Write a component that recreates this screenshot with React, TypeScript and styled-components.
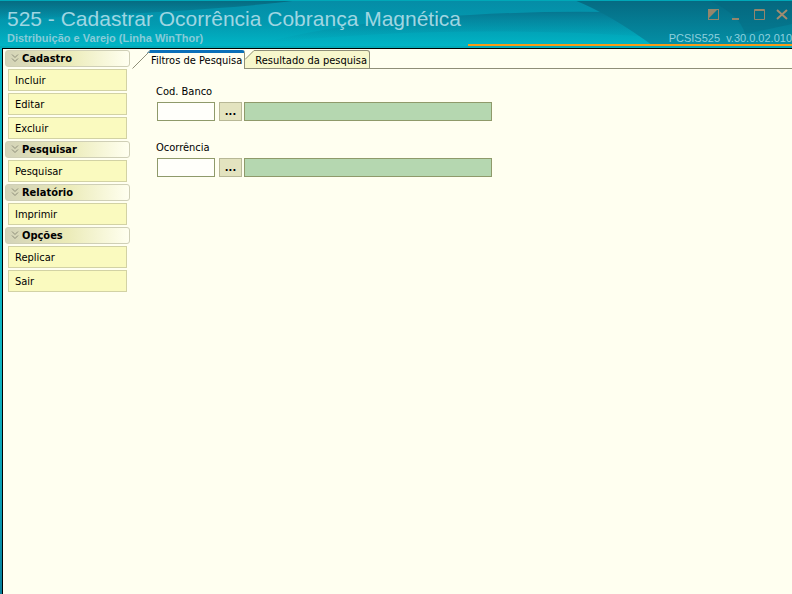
import React, { useState } from "react";
import styled, { createGlobalStyle } from "styled-components";

const UI_FONT = '"DejaVu Sans Condensed", "DejaVu Sans", sans-serif';
const HEAD_FONT = '"Liberation Sans", Arial, sans-serif';

const GlobalStyle = createGlobalStyle`
  *, *::before, *::after { box-sizing: border-box; }
  body { margin: 0; background: #fffff0; }
  button, input { font: inherit; color: inherit; margin: 0; }
`;

const Window = styled.div`
  min-height: 100vh;
  display: flex;
  flex-direction: column;
  background: linear-gradient(#00b4c6, #10b8c4 60%, #0a9db4 85%, #08809c);
  font: 11px/14px ${UI_FONT};
  color: #000;
`;

const Header = styled.header`
  position: relative;
  height: 48px;
  display: flex;
  justify-content: space-between;
  overflow: hidden;
  font-family: ${HEAD_FONT};
`;

const Backdrop = styled.svg`
  position: absolute;
  inset: 0;
  width: 100%;
  height: 100%;
`;

const TitleBlock = styled.div`
  position: relative;
  padding: 6px 0 0 7px;
  white-space: nowrap;
`;

const Title = styled.h1`
  margin: 0;
  font-size: 21px;
  line-height: 26px;
  font-weight: 400;
  color: #9fd6e2;
`;

const Subtitle = styled.p`
  margin: 0;
  font-size: 11px;
  line-height: 13px;
  font-weight: 700;
  color: #86cbd8;
`;

const HeaderSide = styled.div`
  position: relative;
  display: flex;
  flex: 0 0 324px;
  flex-direction: column;
  align-items: flex-end;
  justify-content: space-between;
  padding: 8px 0 2px;
`;

const Controls = styled.div`
  display: flex;
  gap: 10px;
  padding-right: 3px;
`;

const ControlButton = styled.button`
  width: 13px;
  height: 13px;
  padding: 0;
  border: 0;
  background: none;
  svg { display: block; }
`;

const Version = styled.div`
  align-self: stretch;
  border-bottom: 2px solid #f99a14;
  text-align: right;
  font-size: 11px;
  line-height: 12px;
  color: #8fd0de;
  white-space: pre;
`;

const Body = styled.div`
  flex: 1;
  display: flex;
  gap: 2px;
  margin-left: 2px;
  border-top: 1px solid #000;
  border-left: 1px solid #000;
  background: #fffff0;
`;

const Sidebar = styled.nav`
  flex: none;
  width: 127px;
  display: flex;
  flex-direction: column;
  gap: 2px;
  padding: 1px 0 0 2px;
`;

const Group = styled.section`
  display: flex;
  flex-direction: column;
  gap: 2px;
`;

const GroupTitle = styled.h2`
  display: flex;
  align-items: center;
  gap: 3px;
  height: 17px;
  margin: 0;
  padding-left: 5px;
  border: 1px solid #cfcfb6;
  border-radius: 3px;
  background: linear-gradient(90deg, #d3d3b8, #ebebb8 50%, #fffff0);
  font-size: 11px;
  font-weight: 700;
`;

const Item = styled.button`
  height: 22px;
  margin: 0 3px;
  padding: 1px 6px 0;
  border: 1px solid #d2d2a4;
  background: #fafabf;
  text-align: left;
`;

const Main = styled.main`
  flex: 1;
  min-width: 0;
`;

const TabList = styled.div`
  display: flex;
  height: 20px;
  padding-top: 1px;
`;

const Tab = styled.button`
  display: flex;
  padding: 0;
  border: 0;
  background: none;
  white-space: nowrap;
`;

const Slant = styled.svg`
  flex: none;
  display: block;
`;

const TabLabel = styled.span<{ $active: boolean }>`
  height: 19px;
  padding: ${(p) => (p.$active ? "1px 2px 0 1px" : "3px 2px 0 0")};
  border: solid #8f8f78;
  border-width: ${(p) => (p.$active ? "3px 1px 0 0" : "1px 1px 1px 0")};
  border-top-color: ${(p) => (p.$active ? "#0a6fb8" : "#8f8f78")};
  border-top-right-radius: 3px;
  background: ${(p) => (p.$active ? "#fffff0" : "#f7f7cc")};
`;

const TabRule = styled.div`
  flex: 1;
  border-bottom: 1px solid #8f8f78;
`;

const Filters = styled.form`
  display: flex;
  flex-direction: column;
  gap: 20px;
  padding: 16px 24px;
`;

const Field = styled.div`
  display: flex;
  flex-direction: column;
  gap: 3px;
`;

const FieldRow = styled.div`
  display: flex;
  height: 19px;
  padding-left: 1px;
`;

const CodeInput = styled.input`
  width: 58px;
  padding: 0 3px;
  border: 1px solid #8f9a6a;
  border-radius: 0;
  background: #fffffa;
`;

const LookupButton = styled.button`
  width: 23px;
  margin: 0 2px 0 4px;
  padding: 0;
  border: 1px solid #b8b896;
  background: #e3e3bf;
  font-weight: 700;
`;

const Description = styled.input`
  flex: 0 1 248px;
  min-width: 0;
  padding: 0 3px;
  border: 1px solid #8f9a6a;
  border-radius: 0;
  background: #b5d7b0;
`;

const groups = [
  { title: "Cadastro", items: ["Incluir", "Editar", "Excluir"] },
  { title: "Pesquisar", items: ["Pesquisar"] },
  { title: "Relatório", items: ["Imprimir"] },
  { title: "Opções", items: ["Replicar", "Sair"] },
];

const tabs = ["Filtros de Pesquisa", "Resultado da pesquisa"];

const fields = [
  { id: "banco", label: "Cod. Banco" },
  { id: "ocorrencia", label: "Ocorrência" },
];

function HeaderBackdrop() {
  return (
    <Backdrop viewBox="0 0 792 48" preserveAspectRatio="none" aria-hidden="true">
      <defs>
        <linearGradient id="base" x1="0" y1="0" x2="0" y2="1">
          <stop offset="0" stopColor="#058ca6" />
          <stop offset="0.5" stopColor="#029ab0" />
          <stop offset="1" stopColor="#00b8c8" />
        </linearGradient>
        <linearGradient id="dark" x1="0" y1="0" x2="0" y2="1">
          <stop offset="0" stopColor="#056a82" />
          <stop offset="1" stopColor="#0492a8" />
        </linearGradient>
        <linearGradient id="corner" x1="0" y1="0" x2="0" y2="1">
          <stop offset="0" stopColor="#066a80" />
          <stop offset="1" stopColor="#066a80" stopOpacity="0" />
        </linearGradient>
        <linearGradient id="band" x1="0" y1="0" x2="0" y2="1">
          <stop offset="0" stopColor="#067690" />
          <stop offset="1" stopColor="#02a4b8" stopOpacity="0" />
        </linearGradient>
      </defs>
      <rect width="792" height="48" fill="url(#base)" />
      <path d="M0 0 H300 Q230 10 0 20Z" fill="url(#corner)" />
      <path d="M258 44 Q350 20 470 15 Q540 11 606 12 L640 36 Q430 24 258 44Z" fill="url(#band)" />
      <path d="M574 0 H792 V48 H656 Q610 14 574 0Z" fill="url(#dark)" />
      <path d="M708 0 Q740 14 745 34 L792 24 V0Z" fill="#066078" opacity=".35" />
      <rect width="792" height="1" fill="#00a8b8" />
      <rect y="46" width="792" height="2" fill="#04aab8" />
    </Backdrop>
  );
}

function Chevrons() {
  return (
    <svg width="8" height="9" viewBox="0 0 8 9" fill="none" stroke="#8c8c78" aria-hidden="true">
      <path d="M1 0.5 L4 3.5 L7 0.5 M1 4.5 L4 7.5 L7 4.5" />
    </svg>
  );
}

const controls = [
  {
    label: "Recolher",
    icon: (
      <>
        <rect x="1.5" y="1.5" width="10" height="10" stroke="#94866c" />
        <path d="M1 11 V1 H11Z" fill="#94866c" />
      </>
    ),
  },
  { label: "Minimizar", icon: <path d="M2 11 H9" stroke="#94866c" strokeWidth="2" /> },
  {
    label: "Maximizar",
    icon: <path d="M1.5 1.5 H11.5 V11.5 H1.5Z M1 2.5 H12" stroke="#94866c" />,
  },
  { label: "Fechar", icon: <path d="M1 2 L11 11 M11 2 L1 11" stroke="#a08c70" strokeWidth="2" /> },
];

export default function App() {
  const [active, setActive] = useState(0);
  return (
    <Window>
      <GlobalStyle />
      <Header>
        <HeaderBackdrop />
        <TitleBlock>
          <Title>525 - Cadastrar Ocorrência Cobrança Magnética</Title>
          <Subtitle>Distribuição e Varejo (Linha WinThor)</Subtitle>
        </TitleBlock>
        <HeaderSide>
          <Controls>
            {controls.map((c) => (
              <ControlButton key={c.label} type="button" aria-label={c.label}>
                <svg width="13" height="13" viewBox="0 0 13 13" fill="none">{c.icon}</svg>
              </ControlButton>
            ))}
          </Controls>
          <Version>{"PCSIS525  v.30.0.02.010"}</Version>
        </HeaderSide>
      </Header>
      <Body>
        <Sidebar>
          {groups.map((g) => (
            <Group key={g.title}>
              <GroupTitle>
                <Chevrons />
                {g.title}
              </GroupTitle>
              {g.items.map((name) => (
                <Item key={name} type="button">{name}</Item>
              ))}
            </Group>
          ))}
        </Sidebar>
        <Main>
          <TabList role="tablist">
            {tabs.map((name, i) => (
              <Tab
                key={name}
                type="button"
                role="tab"
                aria-selected={i === active}
                onClick={() => setActive(i)}
              >
                {i === active ? (
                  <Slant width="18" height="19" viewBox="0 0 18 19" fill="none">
                    <path d="M15 3 L18 0 V3Z" fill="#0a6fb8" />
                    <path d="M0.5 18.5 L18 1" stroke="#8f8f78" />
                  </Slant>
                ) : (
                  <Slant width="10" height="19" viewBox="0 0 10 19">
                    <path d="M0 9 L9 0 H10 V19 H0Z" fill="#f7f7cc" />
                    <path d="M0 9.5 L9 0.5 H10 M0 18.5 H10" fill="none" stroke="#8f8f78" />
                  </Slant>
                )}
                <TabLabel $active={i === active}>{name}</TabLabel>
              </Tab>
            ))}
            <TabRule />
          </TabList>
          <Filters onSubmit={(e) => e.preventDefault()}>
            {fields.map((f) => (
              <Field key={f.id}>
                <label htmlFor={f.id}>{f.label}</label>
                <FieldRow>
                  <CodeInput id={f.id} type="text" />
                  <LookupButton type="button" aria-label={`Localizar ${f.label}`}>...</LookupButton>
                  <Description type="text" readOnly aria-label={`Descrição ${f.label}`} />
                </FieldRow>
              </Field>
            ))}
          </Filters>
        </Main>
      </Body>
    </Window>
  );
}
